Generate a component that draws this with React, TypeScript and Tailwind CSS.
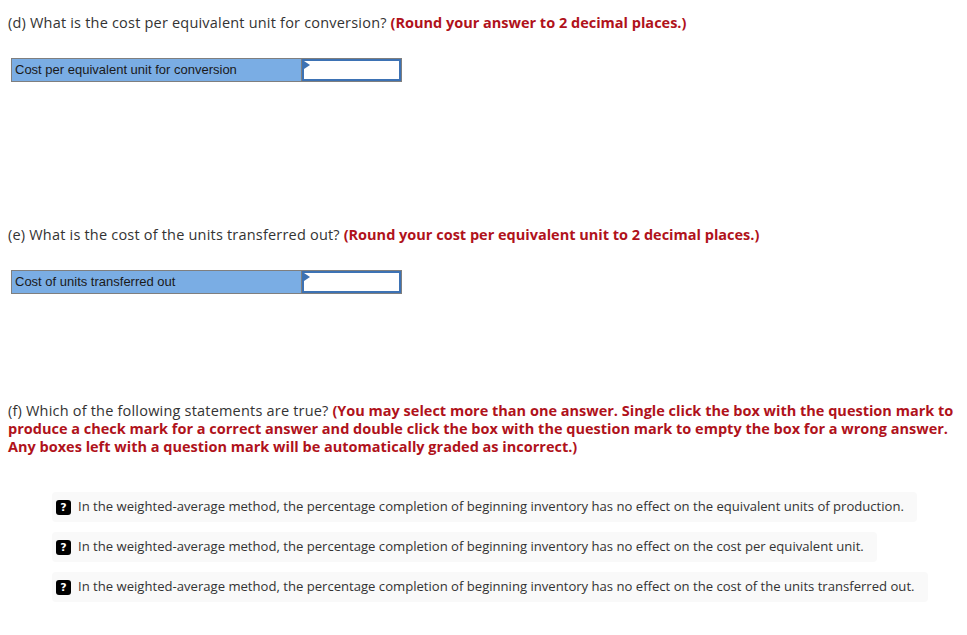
import React from "react";

const font = { fontFamily: "'Open Sans', Lato, sans-serif" };

function AnswerRow({ label }: { label: string }) {
  return (
    <div className="ml-[11px] flex w-[391px] border border-[#7f7f7f]">
      <div className="flex h-[22px] w-[290px] items-center border-r border-[#7f7f7f] bg-[#7aade4] pl-[3px] text-[13px] text-[#1a1a1a] [font-family:'Liberation_Sans',Arial,sans-serif]">
        {label}
      </div>
      <div className="relative h-[22px] flex-1 border-2 border-[#3d72b4] bg-white">
        <div className="absolute left-0 top-0 h-0 w-0 border-y-[4px] border-l-[6px] border-y-transparent border-l-[#3d72b4]" />
      </div>
    </div>
  );
}

function Statement({ text }: { text: string }) {
  return (
    <div className="flex">
      <div className="flex h-[30px] items-center gap-[7px] rounded-[4px] bg-[#f9f9f9] pl-[4px] pr-[13px]">
        <div className="flex h-[15px] w-[15px] items-center justify-center rounded-[3px] bg-black text-[11px] font-bold leading-none text-white [font-family:'DejaVu_Sans',sans-serif]">
          ?
        </div>
        <span className="text-[13.1px] text-[#333]">{text}</span>
      </div>
    </div>
  );
}

function Heading({ q, note }: { q: string; note: string }) {
  return (
    <p className="text-[14.5px] leading-[18px]">
      <span className="tracking-[0.2px]">{q}</span>{" "}
      <span className="font-bold text-[#b0121b]">{note}</span>
    </p>
  );
}

export default function App() {
  return (
    <div className="min-h-[635px] w-[967px] bg-white text-[#333]" style={font}>
      <div className="pl-[8px] pr-[6px] pt-[14px]">
        <Heading
          q="(d) What is the cost per equivalent unit for conversion?"
          note="(Round your answer to 2 decimal places.)"
        />
      </div>
      <div className="mt-[26px]">
        <AnswerRow label="Cost per equivalent unit for conversion" />
      </div>
      <div className="pl-[8px] pr-[6px] pt-[144px]">
        <Heading
          q="(e) What is the cost of the units transferred out?"
          note="(Round your cost per equivalent unit to 2 decimal places.)"
        />
      </div>
      <div className="mt-[26px]">
        <AnswerRow label="Cost of units transferred out" />
      </div>
      <div className="pl-[8px] pr-[6px] pt-[108px]">
        <Heading
          q="(f) Which of the following statements are true?"
          note="(You may select more than one answer. Single click the box with the question mark to produce a check mark for a correct answer and double click the box with the question mark to empty the box for a wrong answer. Any boxes left with a question mark will be automatically graded as incorrect.)"
        />
      </div>
      <div className="flex flex-col gap-[10px] pl-[52px] pt-[36px]">
        <Statement text="In the weighted-average method, the percentage completion of beginning inventory has no effect on the equivalent units of production." />
        <Statement text="In the weighted-average method, the percentage completion of beginning inventory has no effect on the cost per equivalent unit." />
        <Statement text="In the weighted-average method, the percentage completion of beginning inventory has no effect on the cost of the units transferred out." />
      </div>
    </div>
  );
}
